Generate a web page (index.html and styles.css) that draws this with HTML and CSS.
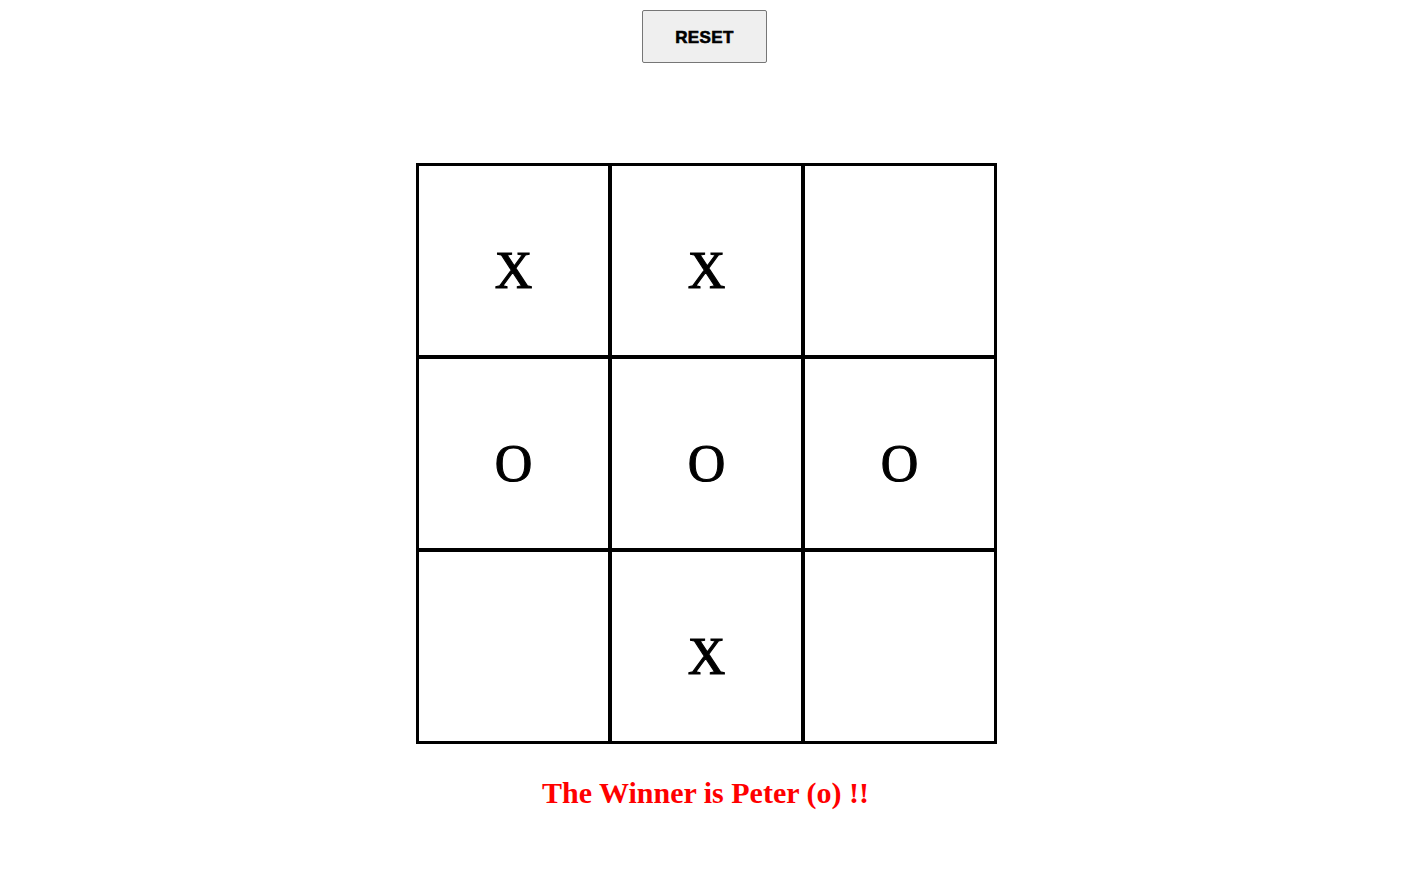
FILE: index.html
```html
<!DOCTYPE html>
<html>
<head>
<meta charset="utf-8">
<link rel="stylesheet" href="styles.css">
</head>
<body>
<main class="game">
  <button class="reset">RESET</button>
  <div class="board">
    <div class="cell">X</div>
    <div class="cell">X</div>
    <div class="cell"></div>
    <div class="cell">O</div>
    <div class="cell">O</div>
    <div class="cell">O</div>
    <div class="cell"></div>
    <div class="cell">X</div>
    <div class="cell"></div>
  </div>
  <p class="winner">The Winner is Peter (o) !!</p>
</main>
</body>
</html>
```
FILE: styles.css
```css
html, body {
  margin: 0;
  padding: 0;
  background: #ffffff;
}
.game {
  display: flex;
  flex-direction: column;
  align-items: center;
  font-family: "Liberation Serif", "Times New Roman", serif;
}
.reset {
  margin-top: 10px;
  width: 125px;
  height: 53px;
  background: #efefef;
  border: 1px solid #767676;
  border-radius: 2px;
  font-family: "Liberation Sans", Arial, sans-serif;
  font-weight: 900;
  font-size: 17px;
  letter-spacing: 0.4px;
  -webkit-text-stroke: 0.6px #000;
  color: #000;
  padding: 2px 0 0 0;
  margin-left: -2px;
}
.board {
  margin-top: 100px;
  margin-left: 2px;
  display: grid;
  grid-template-columns: repeat(3, 193px);
  grid-template-rows: repeat(3, 193px);
  border: 1px solid #000;
}
.cell {
  box-sizing: border-box;
  border: 2px solid #000;
  padding-top: 20px;
  display: flex;
  align-items: center;
  justify-content: center;
  font-size: 52px;
  font-weight: 400;
  -webkit-text-stroke: 1.1px #000;
  color: #000;
}
.winner {
  margin: 32px 0 0 0;
  color: #ff0000;
  font-weight: 700;
  font-size: 30px;
}
```
